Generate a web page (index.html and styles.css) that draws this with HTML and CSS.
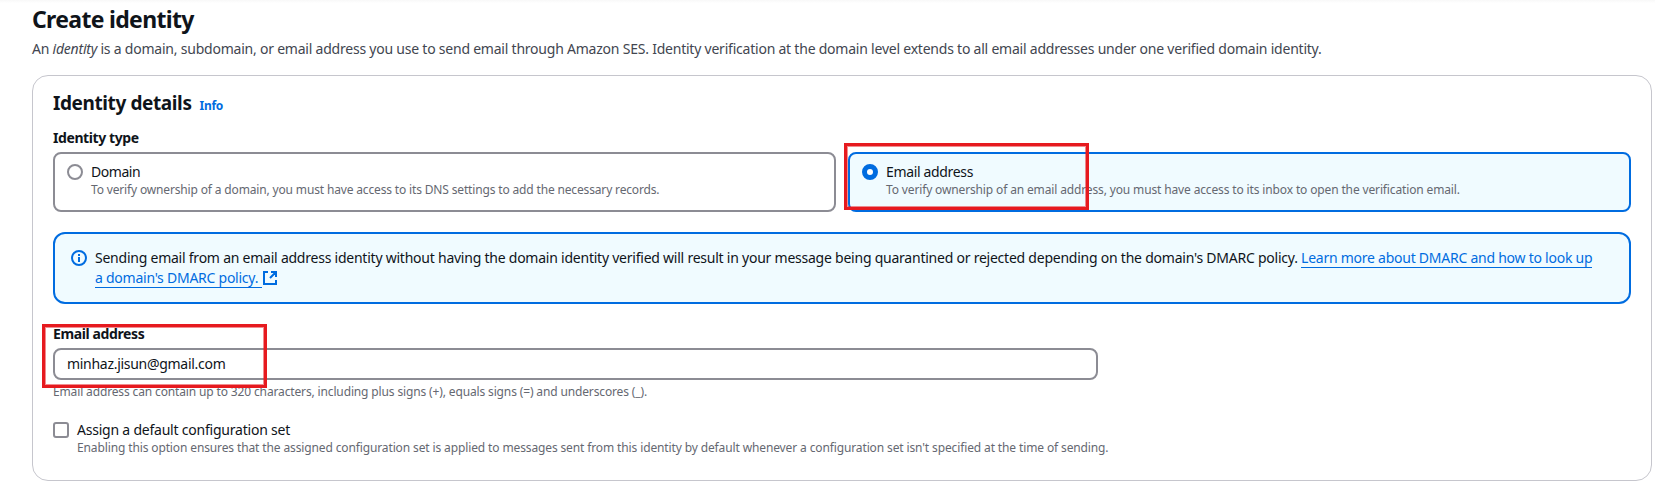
FILE: index.html
```
<!DOCTYPE html>
<html lang="en">
<head>
<meta charset="utf-8">
<title>Create identity</title>
<link rel="stylesheet" href="styles.css">
</head>
<body>
<main class="page">
  <header class="page-header">
    <h1 class="page-title">Create identity</h1>
    <p class="page-desc">An <em>identity</em> is a domain, subdomain, or email address you use to send email through Amazon SES. Identity verification at the domain level extends to all email addresses under one verified domain identity.</p>
  </header>
  <section class="card">
    <div class="card-head">
      <h2 class="card-title">Identity details</h2>
      <a class="info">Info</a>
    </div>
    <div class="label label-type">Identity type</div>
    <div class="tiles">
      <div class="tile">
        <span class="radio"></span>
        <div>
          <div class="option-title domain">Domain</div>
          <div class="option-desc">To verify ownership of a domain, you must have access to its DNS settings to add the necessary records.</div>
        </div>
      </div>
      <div class="tile selected">
        <span class="radio checked"></span>
        <div>
          <div class="option-title email">Email address</div>
          <div class="option-desc email-desc">To verify ownership of an email address, you must have access to its inbox to open the verification email.</div>
        </div>
        <span class="mark mark-tile"></span>
      </div>
    </div>
    <div class="alert">
      <svg class="alert-icon" viewBox="0 0 16 16" fill="none" stroke="currentColor" stroke-width="2"><circle cx="8" cy="8" r="7"/><path d="M8 12V7M8 6V4"/></svg>
      <p class="alert-text">Sending email from an email address identity without having the domain identity verified will result in your message being quarantined or rejected depending on the domain's DMARC policy. <a class="link">Learn more about DMARC and how to look up<br>a domain's DMARC policy.&nbsp;</a><svg class="external" viewBox="0 0 14 14" fill="none" stroke="currentColor" stroke-width="2"><path d="M5 1H1v12h12V9M8 1h5v5M13 1L7 7"/></svg></p>
    </div>
    <div class="field">
      <div class="label label-email">Email address</div>
      <div class="input">minhaz.jisun@gmail.com</div>
      <div class="hint">Email address can contain up to 320 characters, including plus signs (+), equals signs (=) and underscores (_).</div>
      <span class="mark mark-field"></span>
    </div>
    <div class="check-row">
      <span class="checkbox"></span>
      <div>
        <div class="option-title assign">Assign a default configuration set</div>
        <div class="option-desc assign-desc">Enabling this option ensures that the assigned configuration set is applied to messages sent from this identity by default whenever a configuration set isn't specified at the time of sending.</div>
      </div>
    </div>
  </section>
</main>
</body>
</html>
```
FILE: styles.css
```
* { box-sizing: border-box; }
body {
  margin: 0;
  height: 488px;
  overflow: hidden;
  background: linear-gradient(#f8f8f8, #fff 3px);
  color: #0f141a;
  font: 14px/20px "Noto Sans", "Open Sans", sans-serif;
  letter-spacing: -0.234px;
  white-space: nowrap;
}
h1, h2, p { margin: 0; }
.page { padding: 4px 3px 0 32px; }
.page-header { height: 71px; }
.page-title { font-size: 23px; line-height: 30px; font-weight: 700; letter-spacing: -0.68px; }
.page-desc { margin-top: 5px; color: #424650; letter-spacing: -0.222px; }
.card {
  height: 406px;
  padding: 15px 20px 0;
  border: 1px solid #c6c6cd;
  border-radius: 16px;
  background: #fff;
}
.card-head { display: flex; align-items: baseline; gap: 8px; height: 24px; }
.card-title { font-size: 19px; line-height: 24px; font-weight: 700; letter-spacing: -0.4px; }
.info { color: #006ce0; font-size: 12px; font-weight: 700; line-height: 16px; letter-spacing: -0.3px; }
.label { font-weight: 700; }
.label-type { margin-top: 13px; letter-spacing: -0.41px; }
.label-email { letter-spacing: -0.39px; }
.tiles { display: grid; grid-template-columns: 1fr 1fr; gap: 12px; margin-top: 4px; }
.tile {
  position: relative;
  display: flex;
  gap: 8px;
  height: 60px;
  padding: 8px 12px;
  border: 2px solid #8c8c94;
  border-radius: 8px;
}
.tile.selected { border-color: #006ce0; background: #f0fbff; }
.radio {
  width: 16px;
  height: 16px;
  margin-top: 2px;
  border: 2px solid #8c8c94;
  border-radius: 50%;
  background: #fff;
}
.radio.checked { border: 5px solid #006ce0; }
.option-desc, .hint { color: #656871; font-size: 12px; line-height: 16px; letter-spacing: -0.155px; }
.email-desc { letter-spacing: -0.14px; }
.hint { letter-spacing: -0.14px; }
.assign-desc { letter-spacing: -0.125px; }
.domain { letter-spacing: -0.45px; }
.email { letter-spacing: -0.34px; }
.assign { letter-spacing: -0.22px; }
.alert {
  display: flex;
  gap: 8px;
  height: 72px;
  margin-top: 20px;
  padding: 14px 16px;
  border: 2px solid #006ce0;
  border-radius: 12px;
  background: #f0fbff;
}
.alert-icon { width: 16px; height: 16px; margin-top: 2px; color: #006ce0; }
.link { color: #006ce0; border-bottom: 1px solid; letter-spacing: -0.25px; }
.external { width: 14px; height: 14px; margin-left: 1px; color: #006ce0; vertical-align: -2px; }
.field { position: relative; margin-top: 20px; }
.input {
  width: 1045px;
  height: 32px;
  margin-top: 4px;
  padding: 4px 12px;
  border: 2px solid #8c8c94;
  border-radius: 8px;
  letter-spacing: -0.29px;
}
.hint { margin-top: 4px; }
.mark {
  position: absolute;
  border: 3px solid #e61a1f;
  box-shadow: inset 0 0 0 1px rgba(230, 26, 31, 0.5);
}
.mark-tile { left: -6px; top: -11px; width: 245px; height: 67px; }
.mark-field { left: -11px; top: 0; width: 225px; height: 64px; }
.check-row { display: flex; gap: 8px; margin-top: 20px; }
.checkbox { width: 16px; height: 16px; margin-top: 2px; border: 2px solid #8c8c94; border-radius: 3px; }
```
